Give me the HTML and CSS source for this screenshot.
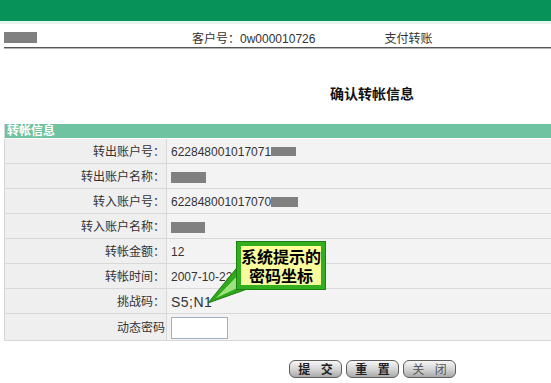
FILE: index.html
```html
<!DOCTYPE html>
<html>
<head>
<meta charset="utf-8">
<link rel="stylesheet" href="styles.css">
</head>
<body>
<div class="topbar"></div>
<div class="info">
  <span class="redact r-user"></span>
  <span class="cust">客户号：0w000010726</span>
  <span class="kind">支付转账</span>
</div>
<div class="title">确认转帐信息</div>
<div class="panel">
  <table class="form">
    <tr class="head"><th colspan="2">转帐信息</th></tr>
    <tr><td class="lbl">转出账户号：</td><td class="val">622848001017071<span class="redact r-acc"></span></td></tr>
    <tr><td class="lbl">转出账户名称：</td><td class="val"><span class="redact r-name"></span></td></tr>
    <tr><td class="lbl">转入账户号：</td><td class="val">622848001017070<span class="redact r-acc2"></span></td></tr>
    <tr><td class="lbl">转入账户名称：</td><td class="val"><span class="redact r-name2"></span></td></tr>
    <tr><td class="lbl">转帐金额：</td><td class="val">12</td></tr>
    <tr><td class="lbl">转帐时间：</td><td class="val">2007-10-22</td></tr>
    <tr><td class="lbl">挑战码：</td><td class="val code">S5;N1</td></tr>
    <tr class="last"><td class="lbl">动态密码</td><td class="val"><input class="pwd" type="text"></td></tr>
  </table>
  <div class="callout">
    <svg class="tail" width="130" height="70" viewBox="0 0 130 70">
      <polygon points="36,25 46,49 4,64" fill="#2fa81c" stroke="#1c7f10" stroke-width="1"/>
      <polygon points="38,32 42,45 12,59" fill="#9be27f"/>
    </svg>
    <div class="bubble">系统提示的<br>密码坐标</div>
  </div>
</div>
<div class="buttons">
  <button class="btn">提 交</button>
  <button class="btn">重 置</button>
  <button class="btn btn-light">关 闭</button>
</div>
</body>
</html>
```

FILE: styles.css
```css
html, body {
  margin: 0;
  padding: 0;
  background: #ffffff;
  overflow: hidden;
}
body {
  font-family: "Liberation Sans", "Noto Sans CJK SC", sans-serif;
  font-size: 12px;
  color: #333333;
}
.topbar {
  height: 21px;
  background: #069259;
  border-bottom: 3px solid #e6f6ee;
}
.info {
  display: flex;
  align-items: flex-start;
  margin-left: 4px;
  padding-top: 8px;
  height: 15px;
  border-bottom: 1px solid #555555;
  box-shadow: 0 1px 0 #b5b5b5;
}
.redact {
  display: inline-block;
  background: #808080;
  vertical-align: middle;
}
.r-user {
  width: 33px;
  height: 11px;
}
.cust {
  margin-left: 155px;
  line-height: 15px;
  color: #333;
}
.kind {
  margin-left: 69px;
  line-height: 15px;
  color: #333;
}
.title {
  margin: 38px 0 0 330px;
  height: 16px;
  line-height: 16px;
  font-size: 14px;
  font-weight: bold;
  color: #111;
}
.panel {
  position: relative;
  margin: 22px 0 0 4px;
}
.form {
  width: 100%;
  border-collapse: collapse;
  border-left: 1px solid #d6d6d6;
}
.head th {
  height: 14px;
  padding: 0 0 0 2px;
  background: #6fc3a0;
  color: #ffffff;
  text-align: left;
  font-weight: bold;
  font-size: 12px;
  line-height: 14px;
  border-bottom: 1px solid #ffffff;
}
.form td {
  box-sizing: border-box;
  height: 25px;
  padding: 2px 0 0 0;
  border-bottom: 1px solid #d8d8d8;
  line-height: 16px;
}
.form .lbl {
  width: 162px;
  padding-right: 1px;
  text-align: right;
  background: #efefef;
  border-right: 1px solid #d8d8d8;
}
.form .val {
  padding-left: 4px;
  background: #f3f3f3;
  color: #333;
}
.code {
  font-size: 14px;
  letter-spacing: 0.5px;
}
.form .last td {
  height: 27px;
  padding-top: 1px;
}
.r-acc {
  width: 25px;
  height: 9px;
  margin-top: -2px;
}
.r-acc2 {
  width: 27px;
  height: 10px;
  margin-top: -2px;
}
.r-name {
  width: 35px;
  height: 11px;
}
.r-name2 {
  width: 34px;
  height: 11px;
}
.pwd {
  display: block;
  width: 57px;
  height: 22px;
  box-sizing: border-box;
  border: 1px solid #9fb0c2;
  background: #ffffff;
  margin: 0;
  padding: 0;
}
.callout {
  position: absolute;
  left: 200px;
  top: 115px;
  width: 130px;
  height: 70px;
}
.tail {
  position: absolute;
  left: 0;
  top: 0;
}
.bubble {
  position: absolute;
  left: 33px;
  top: 3px;
  width: 88px;
  height: 47px;
  box-sizing: border-box;
  border: 4px solid #32ae1e;
  outline: 1px solid #1d8212;
  background: linear-gradient(#ffff9a, #f4f9a0);
  color: #000;
  font-family: "Noto Sans CJK SC", sans-serif;
  font-size: 16px;
  font-weight: bold;
  line-height: 19px;
  text-align: center;
  padding-top: 1px;
}
.buttons {
  display: flex;
  gap: 4px;
  margin: 19px 0 0 289px;
}
.btn {
  width: 53px;
  height: 18px;
  padding: 0 0 0 4px;
  border: 1px solid #5e5e5e;
  border-radius: 6px;
  background: linear-gradient(#f7f7f7, #d2d2d2 55%, #a9a9a9);
  font-family: "Noto Sans CJK SC", sans-serif;
  font-size: 12px;
  font-weight: bold;
  line-height: 16px;
  letter-spacing: 4px;
  color: #222;
}
.btn-light {
  font-weight: normal;
  color: #555;
}
```
